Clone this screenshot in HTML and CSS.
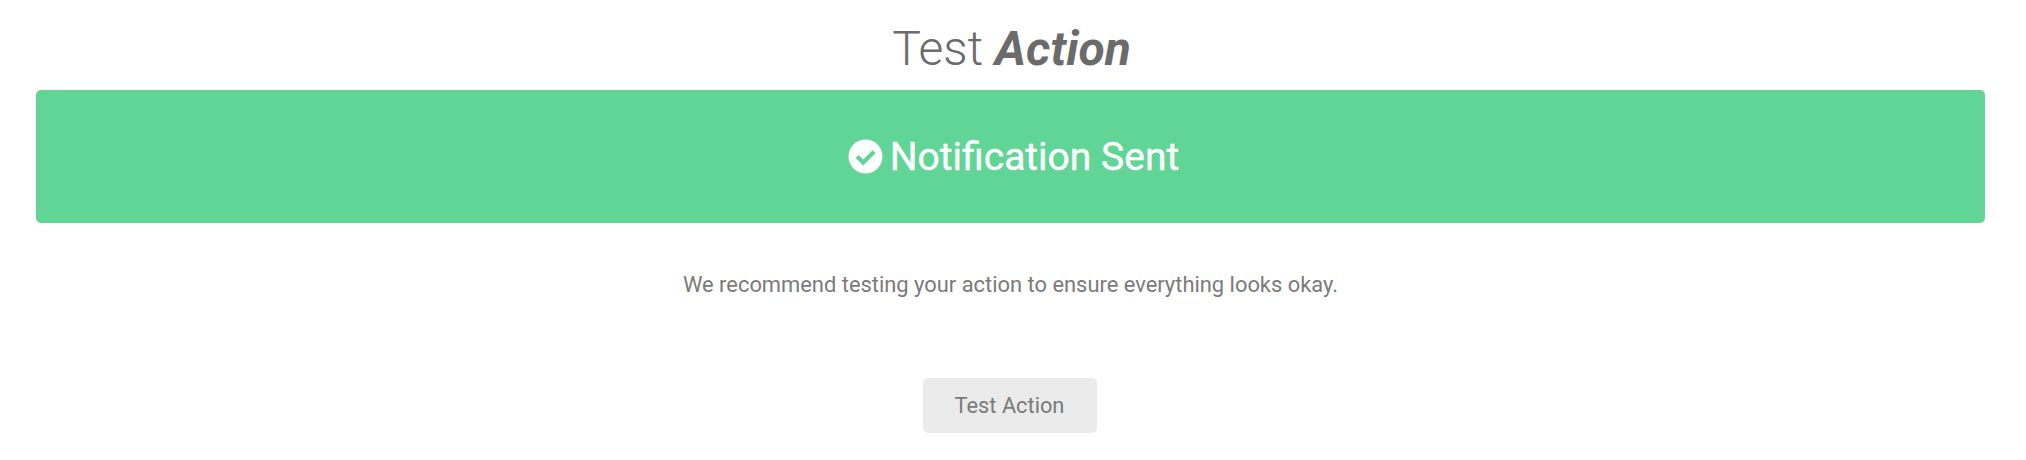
FILE: index.html
```html
<!DOCTYPE html>
<html lang="en">
<head>
<meta charset="utf-8">
<title>Test Action</title>
<link rel="stylesheet" href="styles.css">
</head>
<body>
<main class="page">
  <h1 class="title">Test <em class="title-em">Action</em></h1>
  <div class="banner">
    <svg class="banner-icon" viewBox="0 0 36 36" aria-hidden="true">
      <circle cx="18" cy="18" r="17.5" fill="#fff"/>
      <path d="M9.4 18l6.2 6.2L26.8 13" fill="none" stroke="#61d595" stroke-width="4.4"/>
    </svg>
    <span class="banner-text">Notification Sent</span>
  </div>
  <p class="hint">We recommend testing your action to ensure everything looks okay.</p>
  <button class="btn" type="button">Test Action</button>
</main>
</body>
</html>
```
FILE: styles.css
```css
html, body {
  margin: 0;
  padding: 0;
  height: 100%;
  background: #fff;
  overflow: hidden;
}

.page {
  display: flex;
  flex-direction: column;
  align-items: center;
  padding: 0 41px 0 36px;
  font-family: Roboto, "Liberation Sans", sans-serif;
  color: #666;
}

.title {
  margin: 21px 0 0 2px;
  height: 69px;
  line-height: 56px;
  font-size: 48px;
  font-weight: 300;
  color: #6b6b6b;
}

.title-em {
  font-style: italic;
  font-weight: 700;
}

.banner {
  align-self: stretch;
  height: 133px;
  display: flex;
  align-items: center;
  justify-content: center;
  gap: 7px;
  padding-left: 6px;
  background: #61d595;
  border-radius: 5px;
  color: #fff;
}

.banner-icon {
  width: 35px;
  height: 35px;
  flex: none;
}

.banner-text {
  font-size: 39px;
  font-weight: 400;
  line-height: 48px;
  -webkit-text-stroke: 0.4px #fff;
}

.hint {
  margin: 46px 0 0;
  font-size: 21.9px;
  line-height: 32px;
  color: #7a7a7a;
}

.btn {
  margin: 77px 2px 0 0;
  width: 174px;
  height: 55px;
  padding: 0;
  border: 0;
  border-radius: 5px;
  background: #ebebeb;
  color: #7a7a7a;
  font-family: inherit;
  font-size: 21.8px;
}
```
